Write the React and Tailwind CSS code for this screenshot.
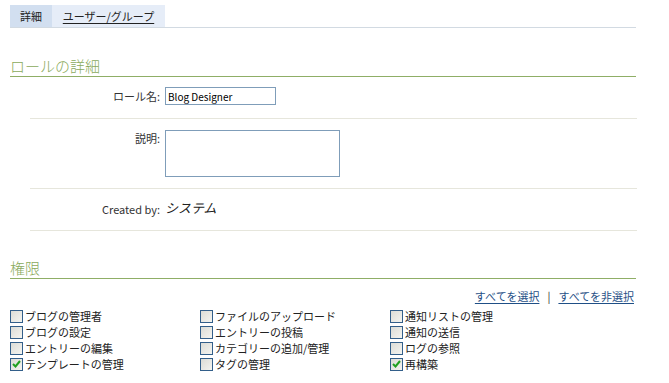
const font = { fontFamily: '"Noto Sans CJK JP", "Liberation Sans", sans-serif' };

const perms = [
  ['ブログの管理者', false], ['ファイルのアップロード', false], ['通知リストの管理', false],
  ['ブログの設定', false], ['エントリーの投稿', false], ['通知の送信', false],
  ['エントリーの編集', false], ['カテゴリーの追加/管理', false], ['ログの参照', false],
  ['テンプレートの管理', true], ['タグの管理', false], ['再構築', true],
];

function Box({ checked }) {
  return (
    <span className="w-[13px] h-[13px] shrink-0 border border-[#335f8a] bg-gradient-to-br from-[#dcdcd6] to-[#f4f4f0] flex items-center justify-center">
      {checked && (
        <svg width="9" height="8" viewBox="0 0 9 8">
          <path d="M1 4 L3.5 6.5 L8 1" stroke="#21a121" strokeWidth="2" fill="none" />
        </svg>
      )}
    </span>
  );
}

function Row({ label, children, className = '' }) {
  return (
    <div className={`flex border-b border-[#e6e6dc] ml-[30px] mr-[32px] ${className}`}>
      <div className="w-[135px] text-right pr-[5px] text-[11px] text-[#333]">{label}</div>
      {children}
    </div>
  );
}

export default function App() {
  return (
    <div className="w-[669px] h-[383px] bg-white text-[#333] overflow-hidden" style={font}>
      <div className="pt-[5px] px-[10px] mr-[23px]">
        <div className="flex border-b border-[#d2dae2] h-[23px]">
          <div className="w-[42px] bg-[#d2dff0] text-[11px] text-[#222] flex items-center justify-center">詳細</div>
          <div className="w-[113px] bg-[#e6edf8] text-[11px] text-[#222] flex items-center justify-center">
            <span className="underline underline-offset-2">ユーザー/グループ</span>
          </div>
        </div>
      </div>

      <div className="mx-[10px] mr-[33px] mt-[28px] border-b border-[#8fae66] text-[15px] font-light leading-[19px] text-[#8aaa5c] pb-[1px]">
        ロールの詳細
      </div>

      <Row label="ロール名:" className="pt-[10px] h-[42px] items-center pb-[13px]">
        <input
          defaultValue="Blog Designer"
          className="w-[111px] h-[18px] border border-[#7f9db9] px-[2px] text-[10px] text-black outline-none"
        />
      </Row>
      <Row label="説明:" className="pt-[11px] h-[70px] items-start">
        <div className="w-[175px] h-[47px] border border-[#7f9db9]" />
      </Row>
      <Row label="Created by:" className="h-[42px] items-center">
        <span className="text-[13px] italic text-[#222] -mt-[3px]">システム</span>
      </Row>

      <div className="mx-[10px] mr-[33px] mt-[27px] border-b border-[#8fae66] text-[15px] font-light leading-[19px] text-[#8aaa5c] pb-[1px]">
        権限
      </div>

      <div className="flex justify-end mr-[35px] mt-[10px] text-[11px] leading-[14px] items-center gap-[8px]">
        <a className="text-[#1f4f86] underline underline-offset-2">すべてを選択</a>
        <span className="text-[#333]">|</span>
        <a className="text-[#1f4f86] underline underline-offset-2">すべてを非選択</a>
      </div>

      <div className="grid grid-cols-[190px_190px_190px] ml-[10px] mt-[5px]">
        {perms.map(([name, checked]) => (
          <div key={name} className="flex items-center gap-[2px] h-[16px] text-[11px] text-[#222]">
            <Box checked={checked} />
            <span>{name}</span>
          </div>
        ))}
      </div>
    </div>
  );
}
